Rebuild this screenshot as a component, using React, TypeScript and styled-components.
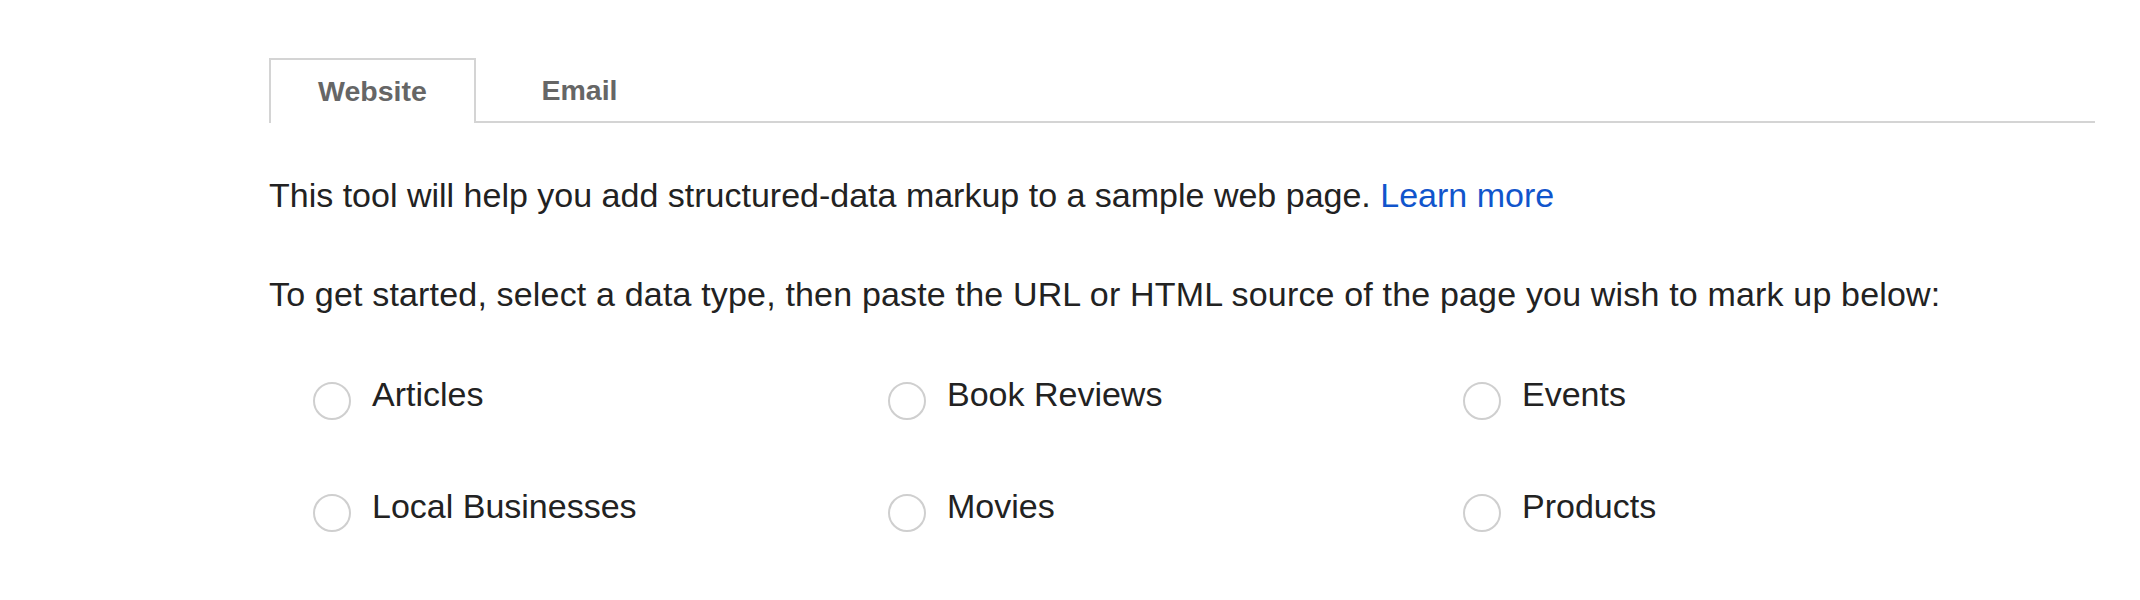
import React, { useState } from "react";
import styled, { createGlobalStyle } from "styled-components";

const GlobalStyle = createGlobalStyle`
  html, body {
    margin: 0;
    padding: 0;
    background: #ffffff;
  }
  body {
    font-family: "Liberation Sans", Arial, sans-serif;
    color: #222222;
  }
`;

const Page = styled.div`
  width: 2140px;
  height: 600px;
  box-sizing: border-box;
  padding: 58px 45px 0 269px;
  overflow: hidden;
`;

const TabBar = styled.div`
  display: flex;
  border-bottom: 2px solid #d4d4d4;
  height: 63px;
`;

const Tab = styled.button<{ $active?: boolean }>`
  all: unset;
  box-sizing: border-box;
  width: 207px;
  height: ${(p) => (p.$active ? "65px" : "63px")};
  display: flex;
  align-items: center;
  justify-content: center;
  font-family: "Liberation Sans", Arial, sans-serif;
  font-weight: 700;
  font-size: 28.5px;
  color: #666666;
  background: #ffffff;
  cursor: pointer;
  border: ${(p) => (p.$active ? "2px solid #d4d4d4" : "none")};
  border-bottom: none;
  padding-top: ${(p) => (p.$active ? "0" : "2px")};
  position: relative;
  z-index: 1;
`;

const Paragraph = styled.p<{ $top: number; $spacing?: number }>`
  margin: ${(p) => p.$top}px 0 0 0;
  font-size: 34px;
  line-height: 39px;
  letter-spacing: ${(p) => p.$spacing ?? 0}px;
  color: #222222;
`;

const Link = styled.a`
  color: #1155cc;
  text-decoration: none;
`;

const OptionGrid = styled.div`
  display: grid;
  grid-template-columns: repeat(3, 575px);
  row-gap: 67px;
  margin: 61px 0 0 44px;
`;

const Option = styled.label`
  display: flex;
  align-items: flex-start;
  gap: 21px;
  cursor: pointer;
  font-size: 34px;
  line-height: 39px;
  color: #222222;
`;

const Circle = styled.span<{ $checked?: boolean }>`
  box-sizing: border-box;
  width: 38px;
  height: 38px;
  margin-top: 7px;
  border-radius: 50%;
  border: 2px solid #cfcfcf;
  background: #ffffff;
  display: flex;
  align-items: center;
  justify-content: center;
  flex-shrink: 0;
  &::after {
    content: "";
    width: 16px;
    height: 16px;
    border-radius: 50%;
    background: ${(p) => (p.$checked ? "#444" : "transparent")};
  }
`;

const options = [
  "Articles",
  "Book Reviews",
  "Events",
  "Local Businesses",
  "Movies",
  "Products",
];

export default function App() {
  const [tab, setTab] = useState("Website");
  const [selected, setSelected] = useState<string | null>(null);
  return (
    <>
      <GlobalStyle />
      <Page>
        <TabBar>
          {["Website", "Email"].map((t) => (
            <Tab key={t} $active={tab === t} onClick={() => setTab(t)}>
              {t}
            </Tab>
          ))}
        </TabBar>
        <Paragraph $top={53}>
          This tool will help you add structured-data markup to a sample web page.{" "}
          <Link href="#">Learn more</Link>
        </Paragraph>
        <Paragraph $top={60} $spacing={0.17}>
          To get started, select a data type, then paste the URL or HTML source of the page you wish to mark up below:
        </Paragraph>
        <OptionGrid>
          {options.map((o) => (
            <Option key={o} onClick={() => setSelected(o)}>
              <Circle $checked={selected === o} />
              {o}
            </Option>
          ))}
        </OptionGrid>
      </Page>
    </>
  );
}
